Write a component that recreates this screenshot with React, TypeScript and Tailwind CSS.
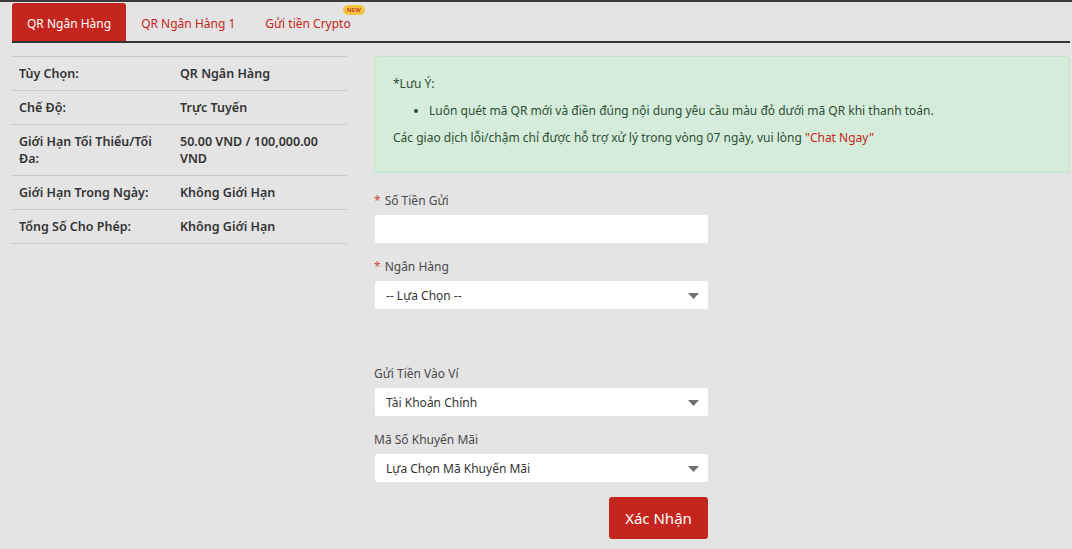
import { useState } from 'react'

const FONT = "font-['Segoe_UI','Noto_Sans',sans-serif]"

const tabs = [
  { label: 'QR Ngân Hàng' },
  { label: 'QR Ngân Hàng 1' },
  { label: 'Gửi tiền Crypto', badge: 'NEW' },
]

const infoRows: [string, string][] = [
  ['Tùy Chọn:', 'QR Ngân Hàng'],
  ['Chế Độ:', 'Trực Tuyến'],
  ['Giới Hạn Tối Thiểu/Tối Đa:', '50.00 VND / 100,000.00 VND'],
  ['Giới Hạn Trong Ngày:', 'Không Giới Hạn'],
  ['Tổng Số Cho Phép:', 'Không Giới Hạn'],
]

function Caret() {
  return (
    <svg className="w-[11px] h-[6px] text-[#6f6f6f]" viewBox="0 0 11 6" fill="currentColor" aria-hidden>
      <path d="M0 0h11L5.5 6z" />
    </svg>
  )
}

function SelectBox({ value }: { value: string }) {
  return (
    <div className="h-[28px] bg-white rounded-[2px] ml-[1px] flex items-center justify-between pl-[11px] pr-[9px] pt-[1px] text-[12px] text-[#333]">
      <span>{value}</span>
      <Caret />
    </div>
  )
}

function Label({ text, required }: { text: string; required?: boolean }) {
  return (
    <div className="text-[12px] text-[#4a4a4a] leading-[18px] mb-[5px]">
      {required && <span className="text-[#d0453d] mr-[4px]">*</span>}
      {text}
    </div>
  )
}

export default function App() {
  const [active, setActive] = useState(0)

  return (
    <div className={`${FONT} min-h-[549px] bg-[#e4e4e4] border-t-2 border-[#3a3a3a] px-[12px]`}>
      <div className="flex items-end h-[41px] border-b-2 border-[#333] mr-[-10px]">
        {tabs.map((t, i) => (
          <button
            key={t.label}
            onClick={() => setActive(i)}
            className={`relative h-[38px] px-[15px] pt-[3px] rounded-t-[3px] text-[12px] ${
              active === i ? 'bg-[#c4261d] text-white' : 'text-[#c4261d]'
            }`}
          >
            {t.label}
            {t.badge && (
              <span className="absolute top-[2px] right-[1px] px-[4px] h-[10px] leading-[10px] rounded-full bg-[#f5c542] text-[#c8471f] text-[6px] font-bold">
                {t.badge}
              </span>
            )}
          </button>
        ))}
      </div>

      <div className="flex gap-[27px] mt-[13px]">
        <div className="w-[335px] shrink-0 border-t border-[#c8c8c8]">
          {infoRows.map(([k, v]) => (
            <div key={k} className="flex border-b border-[#c8c8c8] py-[8px] text-[12.5px] font-semibold text-[#333] leading-[17px]">
              <div className="w-[168px] pl-[7px] pr-[8px]">{k}</div>
              <div className="flex-1">{v}</div>
            </div>
          ))}
        </div>

        <div className="flex-1 mr-[-10px]">
          <div className="bg-[#d4ecd9] border border-[#c3e6cb] rounded-[3px] px-[18px] pt-[18px] pb-[25px] text-[12px] text-[#2f4f36] leading-[18px]">
            <p>*Lưu Ý:</p>
            <ul className="list-disc pl-[36px] mt-[9px]">
              <li>Luôn quét mã QR mới và điền đúng nội dung yêu cầu màu đỏ dưới mã QR khi thanh toán.</li>
            </ul>
            <p className="mt-[9px]">
              Các giao dịch lỗi/chậm chỉ được hỗ trợ xử lý trong vòng 07 ngày, vui lòng{' '}
              <span className="text-[#c4261d]">"Chat Ngay"</span>
            </p>
          </div>

          <div className="w-[334px] mt-[19px]">
            <Label text="Số Tiền Gửi" required />
            <div className="h-[28px] bg-white rounded-[2px] ml-[1px]" />

            <div className="mt-[15px]">
              <Label text="Ngân Hàng" required />
              <SelectBox value="-- Lựa Chọn --" />
            </div>

            <div className="mt-[56px]">
              <Label text="Gửi Tiền Vào Ví" />
              <SelectBox value="Tài Khoản Chính" />
            </div>

            <div className="mt-[15px]">
              <Label text="Mã Số Khuyến Mãi" />
              <SelectBox value="Lựa Chọn Mã Khuyến Mãi" />
            </div>

            <div className="flex justify-end mt-[15px]">
              <button className="h-[42px] w-[99px] bg-[#c4261d] text-white text-[15px] rounded-[3px]">
                Xác Nhận
              </button>
            </div>
          </div>
        </div>
      </div>
    </div>
  )
}
